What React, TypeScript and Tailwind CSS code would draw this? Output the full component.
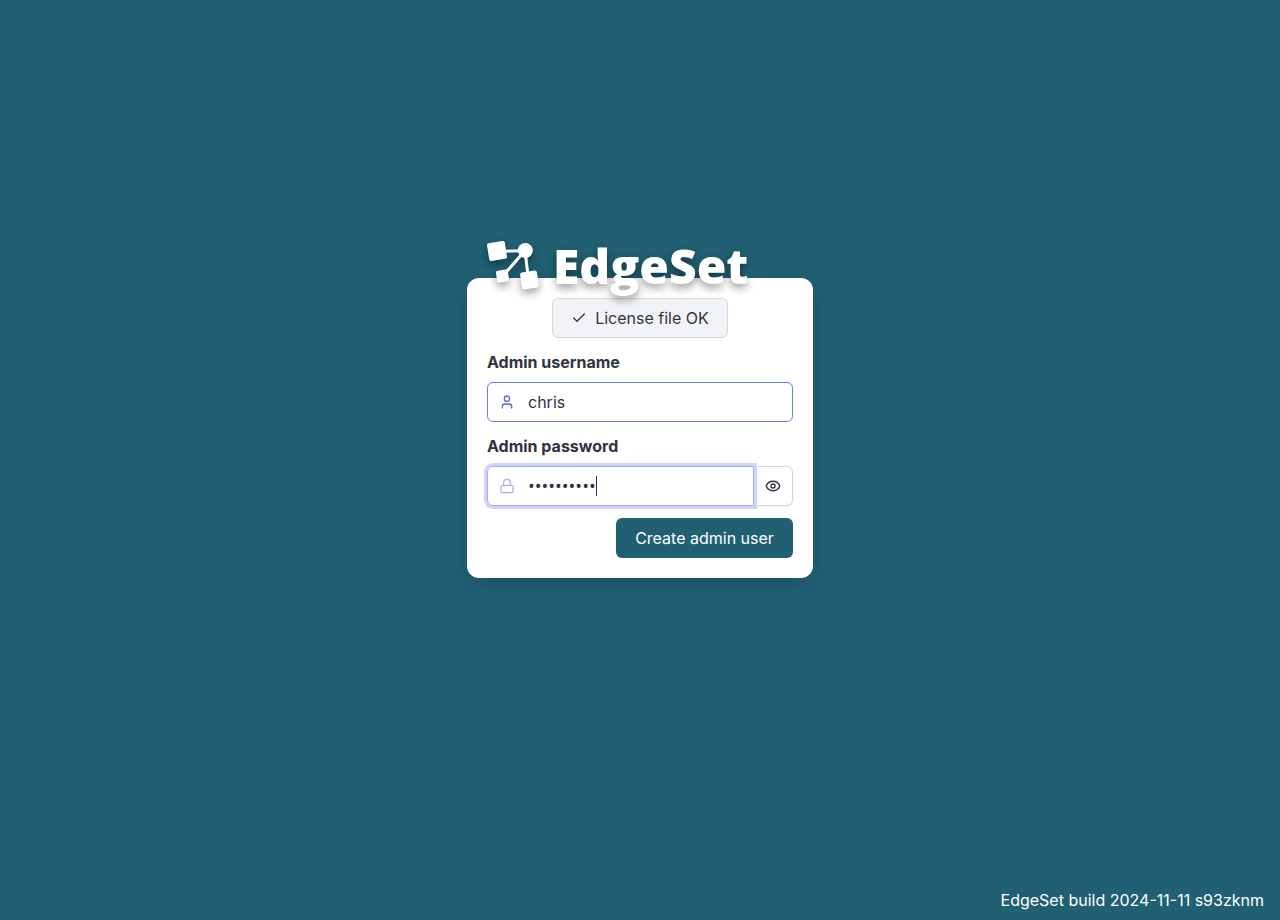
import { useState } from "react";
import { Check, Lock, User } from "lucide-react";

function Logo() {
  return (
    <svg width="54" height="52" viewBox="0 0 54 52" fill="#fff" stroke="#fff" aria-hidden="true">
      <path d="M10 11.5 38 10.5 15 37M38 10.5 41.5 40" fill="none" strokeWidth="3" />
      <rect x="1" y="2" width="18" height="18" rx="2" transform="rotate(-9 10 11)" stroke="none" />
      <circle cx="38.3" cy="10.5" r="7.5" stroke="none" />
      <rect x="9.5" y="30" width="12" height="12" rx="2" transform="rotate(-9 15.5 36)" stroke="none" />
      <rect x="34" y="31.500" width="17" height="17" rx="2" transform="rotate(-9 42.5 40)" stroke="none" />
    </svg>
  );
}

function EyeIcon() {
  return (
    <svg width="16" height="16" viewBox="0 0 16 16" fill="none" stroke="currentColor" strokeWidth="1.4" aria-hidden="true">
      <path d="M1.2 8C2.4 4.9 5 3.3 8 3.3S13.600 4.900 14.800 8C13.600 11.100 11 12.700 8 12.700S2.400 11.100 1.200 8Z" strokeLinejoin="round" />
      <circle cx="8" cy="8" r="2" />
    </svg>
  );
}

export default function App() {
  const [username, setUsername] = useState("chris");
  const [password, setPassword] = useState("edgeset-pw");
  const [visible, setVisible] = useState(false);

  return (
    <div className="flex min-h-screen flex-col bg-[#215f73] font-[Inter,sans-serif] text-base text-[#30333f]">
      <main className="flex flex-1 flex-col items-center justify-center pb-18">
        <form className="w-full max-w-[346px]" onSubmit={(e) => e.preventDefault()}>
          <h1 className="relative -mb-4 flex h-14 items-center gap-3 pl-5 font-['Open_Sans',sans-serif] text-5xl font-extrabold text-white drop-shadow-[0_4px_4px_rgba(0,0,0,0.4)]">
            <Logo />
            EdgeSet
          </h1>
          <div className="flex flex-col gap-3 rounded-xl bg-white p-5 shadow-[0_8px_16px_rgba(0,0,0,0.12)]">
            <div className="flex h-10 min-w-44 items-center justify-center gap-2 self-center rounded-md border border-[#d4d6e0] bg-[#f2f3f6] px-4">
              <Check size={16} strokeWidth={2} />
              License file OK
            </div>
            <div className="flex flex-col gap-2">
              <label htmlFor="username" className="leading-6 font-bold">Admin username</label>
              <div className="flex h-10 items-center gap-[13px] rounded-md border border-[#667eea] px-[11px]">
                <User size={16} className="text-[#5a67d8]" />
                <input id="username" className="min-w-0 flex-1 outline-none" value={username} onChange={(e) => setUsername(e.target.value)} />
              </div>
            </div>
            <div className="flex flex-col gap-2">
              <label htmlFor="password" className="leading-6 font-bold">Admin password</label>
              <div className="flex h-10">
                <div className="relative z-10 flex min-w-0 flex-1 items-center gap-[13px] rounded-l-md border border-[#a3acf0] px-[11px] ring-3 ring-[#cfd4fd]">
                  <Lock size={16} strokeWidth={1.75} className="shrink-0 text-[#a3acf0]" />
                  <input id="password" type={visible ? "text" : "password"} className="min-w-0 flex-1 font-['Open_Sans',sans-serif] text-lg caret-transparent outline-none" value={password} onChange={(e) => setPassword(e.target.value)} />
                  <span className="absolute left-[108px] h-5 w-px bg-[#30333f]" aria-hidden="true" />
                </div>
                <button type="button" aria-label="Show password" className="flex w-[39px] shrink-0 items-center justify-center rounded-r-md border border-l-0 border-[#d4d6e0] shadow-xs" onClick={() => setVisible(!visible)}>
                  <EyeIcon />
                </button>
              </div>
            </div>
            <button type="submit" className="h-10 min-w-[177px] self-end rounded-md bg-[#215f73] px-4 text-white">Create admin user</button>
          </div>
        </form>
      </main>
      <footer className="px-4 pb-2 text-right text-white">EdgeSet build 2024-11-11 s93zknm</footer>
    </div>
  );
}
